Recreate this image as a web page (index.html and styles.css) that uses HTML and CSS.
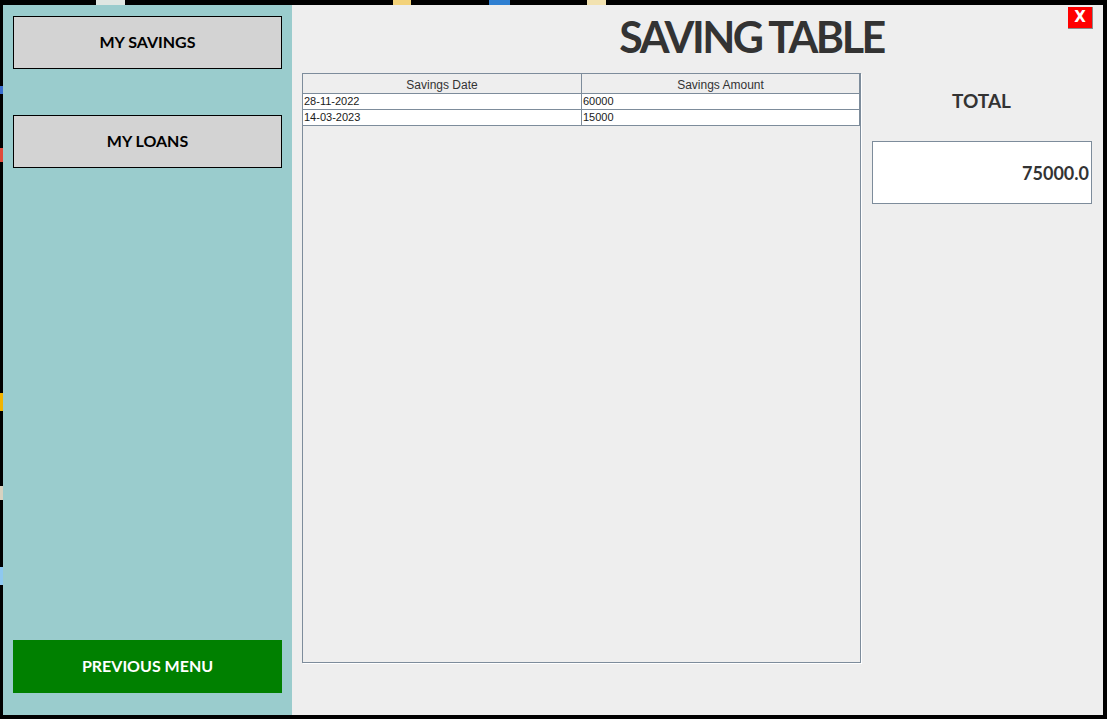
FILE: index.html
```html
<!DOCTYPE html>
<html>
<head>
<meta charset="utf-8">
<link rel="stylesheet" href="styles.css">
</head>
<body>
<div class="desktop">
  <span class="peek p1"></span>
  <span class="peek p2"></span>
  <span class="peek p3"></span>
  <span class="peek p4"></span>
  <span class="peek l1"></span>
  <span class="peek l2"></span>
  <span class="peek l3"></span>
  <span class="peek l4"></span>
  <span class="peek l5"></span>
  <div class="window">
    <aside class="sidebar">
      <button class="side-btn">MY SAVINGS</button>
      <button class="side-btn loans">MY LOANS</button>
      <button class="prev-btn">PREVIOUS MENU</button>
    </aside>
    <main class="main">
      <h1 class="title">SAVING TABLE</h1>
      <button class="close-btn">X</button>
      <div class="content">
        <div class="table-pane">
          <div class="row head">
            <div class="cell">Savings Date</div>
            <div class="cell">Savings Amount</div>
          </div>
          <div class="row">
            <div class="cell">28-11-2022</div>
            <div class="cell">60000</div>
          </div>
          <div class="row">
            <div class="cell">14-03-2023</div>
            <div class="cell">15000</div>
          </div>
        </div>
        <div class="total-panel">
          <div class="total-label">TOTAL</div>
          <div class="total-box">75000.0</div>
        </div>
      </div>
    </main>
  </div>
</div>
</body>
</html>
```
FILE: styles.css
```css
* { box-sizing: border-box; }
html, body {
  margin: 0;
  padding: 0;
  background: #000;
  width: 1107px;
  height: 719px;
  overflow: hidden;
}
.desktop {
  position: relative;
  width: 1107px;
  height: 719px;
  padding: 5px 4px 4px 3px;
}
.peek { position: absolute; display: block; }
.p1 { left: 96px; top: 0; width: 29px; height: 5px; background: #dfe6e2; }
.p2 { left: 393px; top: 0; width: 18px; height: 5px; background: #f3d27a; }
.p3 { left: 489px; top: 0; width: 21px; height: 5px; background: #2f7fd1; }
.p4 { left: 587px; top: 0; width: 19px; height: 5px; background: #f2e2b0; }
.l1 { left: 0; top: 86px; width: 3px; height: 8px; background: #3a6fd0; }
.l2 { left: 0; top: 148px; width: 3px; height: 14px; background: #e04a3a; }
.l3 { left: 0; top: 393px; width: 3px; height: 18px; background: #f2b400; }
.l4 { left: 0; top: 486px; width: 3px; height: 14px; background: #d8d2c0; }
.l5 { left: 0; top: 567px; width: 3px; height: 18px; background: #8ec8f0; }

.window {
  display: flex;
  width: 1100px;
  height: 710px;
  background: #eeeeee;
}
.sidebar {
  width: 289px;
  background: #9acccd;
  display: flex;
  flex-direction: column;
  padding: 11px 10px 22px 10px;
}
.side-btn, .prev-btn {
  font-family: Lato, "DejaVu Sans", sans-serif;
  font-weight: 700;
  font-size: 16px;
  height: 53px;
  width: 269px;
  border: 1px solid #000;
  background: #d3d3d3;
  color: #000;
  padding: 0 0 2px 0;
  margin: 0;
}
.side-btn.loans { margin-top: 46px; }
.prev-btn {
  margin-top: auto;
  background: #008000;
  color: #fff;
  border: none;
}

.main {
  position: relative;
  flex: 1;
  display: flex;
  flex-direction: column;
  padding: 6px 0 0 10px;
}
.title {
  margin: 0;
  padding-left: 98px;
  text-align: center;
  font-family: Lato, "DejaVu Sans", sans-serif;
  font-weight: 700;
  font-size: 43px;
  letter-spacing: -2.5px;
  line-height: 52px;
  color: #333333;
}
.close-btn {
  position: absolute;
  top: 2px;
  right: 10px;
  width: 25px;
  height: 22px;
  background: #ff0000;
  color: #fff;
  border: none;
  border-right: 1px solid #8a8a8a;
  border-bottom: 1px solid #8a8a8a;
  font-family: "DejaVu Sans", sans-serif;
  font-weight: 700;
  font-size: 15px;
  padding: 0;
  line-height: 21px;
}
.content {
  display: flex;
  margin-top: 10px;
  gap: 11px;
}
.table-pane {
  width: 559px;
  height: 590px;
  border: 1px solid #7d8c9b;
  background: #eeeeee;
  box-shadow: 1px 1px 0 #ffffff;
}
.row {
  display: grid;
  grid-template-columns: 279px 278px;
  height: 16px;
  background: #ffffff;
}
.cell {
  border-right: 1px solid #7d8c9b;
  border-bottom: 1px solid #7d8c9b;
  font-family: "Liberation Sans", Arial, sans-serif;
  font-size: 11px;
  line-height: 14px;
  color: #1a1a1a;
  padding-left: 1px;
  white-space: nowrap;
  overflow: hidden;
}
.row.head {
  height: 20px;
  background: #eeeeee;
}
.row.head .cell {
  font-size: 12px;
  line-height: 17px;
  padding-top: 3px;
  padding-left: 0;
  text-align: center;
  color: #333333;
}
.total-panel {
  width: 220px;
  display: flex;
  flex-direction: column;
}
.total-label {
  margin-top: 16px;
  text-align: center;
  font-family: Lato, "DejaVu Sans", sans-serif;
  font-weight: 700;
  font-size: 19px;
  line-height: 24px;
  color: #333333;
  padding-right: 1px;
}
.total-box {
  margin-top: 28px;
  height: 63px;
  background: #ffffff;
  border: 1px solid #7d8c9b;
  display: flex;
  align-items: center;
  justify-content: flex-end;
  padding-right: 2px;
  font-family: Lato, "DejaVu Sans", sans-serif;
  font-weight: 700;
  font-size: 18px;
  color: #333333;
}
```
